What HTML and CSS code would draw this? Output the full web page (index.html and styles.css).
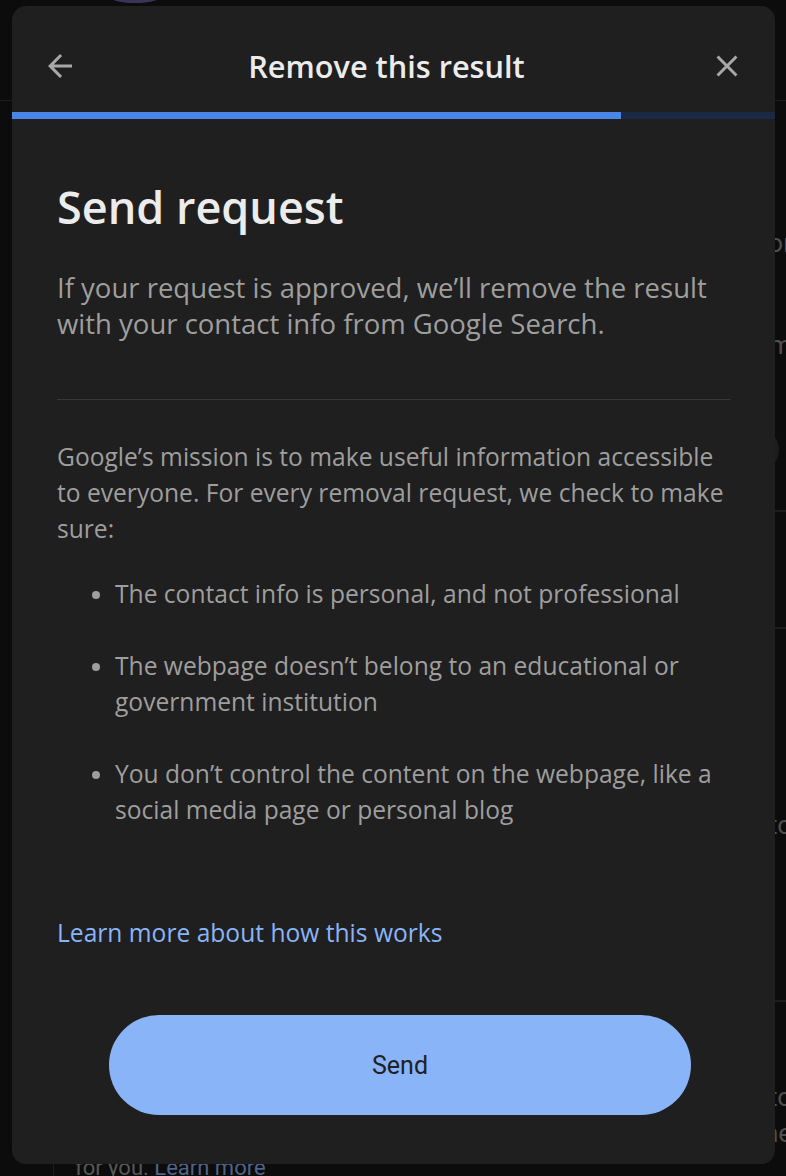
FILE: index.html
```html
<!DOCTYPE html>
<html lang="en">
<head>
<meta charset="utf-8">
<title>Remove this result</title>
<link rel="stylesheet" href="styles.css">
</head>
<body>
<div class="page">
  <div class="page-top"><span class="avatar"></span></div>
  <div class="page-rule"></div>
  <div class="page-side">
    <p class="side-word w1">For</p>
    <p class="side-word w2">Form</p>
    <span class="side-chip"></span>
    <div class="side-rule r1"></div>
    <div class="side-rule r2"></div>
    <p class="side-word w3">to</p>
    <div class="side-rule r3"></div>
    <p class="side-word w4">to</p>
    <p class="side-word w5">the</p>
  </div>
  <div class="page-foot"><span class="foot-text">for you. <span class="foot-link">Learn more</span></span></div>
</div>

<div class="modal" role="dialog" aria-label="Remove this result">
  <header class="modal-header">
    <button class="icon-btn" aria-label="Back">
      <svg viewBox="0 0 24 24" width="36" height="36"><path d="M20 11H7.83l5.59-5.59L12 4l-8 8 8 8 1.41-1.41L7.83 13H20v-2z"/></svg>
    </button>
    <h1 class="modal-title">Remove this result</h1>
    <button class="icon-btn" aria-label="Close">
      <svg viewBox="0 0 24 24" width="36" height="36"><path d="M19 6.41L17.59 5 12 10.59 6.41 5 5 6.41 10.59 12 5 17.59 6.41 19 12 13.41 17.59 19 19 17.59 13.41 12z"/></svg>
    </button>
  </header>
  <div class="progress"><div class="progress-fill"></div></div>
  <div class="modal-body">
    <h2 class="heading">Send request</h2>
    <p class="lead">If your request is approved, we’ll remove the result with your contact info from Google Search.</p>
    <hr class="divider">
    <p class="text">Google’s mission is to make useful information accessible to everyone. For every removal request, we check to make sure:</p>
    <ul class="checks">
      <li>The contact info is personal, and not professional</li>
      <li>The webpage doesn’t belong to an educational or government institution</li>
      <li>You don’t control the content on the webpage, like a social media page or personal blog</li>
    </ul>
    <a class="learn" href="#">Learn more about how this works</a>
  </div>
  <div class="modal-actions">
    <button class="send">Send</button>
  </div>
</div>
</body>
</html>
```

FILE: styles.css
```css
* { box-sizing: border-box; }
html, body { margin: 0; padding: 0; }
body {
  width: 786px;
  height: 1176px;
  overflow: hidden;
  background: #0c0c0c;
  font-family: "Open Sans", "Noto Sans", Arial, sans-serif;
}

/* ---- dimmed page behind the dialog ---- */
.page {
  position: relative;
  display: flow-root;
  width: 786px;
  height: 1176px;
  overflow: hidden;
}
.page-top {
  display: flow-root;
  height: 3px;
  overflow: hidden;
  padding-left: 103px;
}
.avatar {
  display: block;
  width: 64px;
  height: 22px;
  margin-top: -19px;
  border-radius: 50%;
  background: #3a3556;
}
.page-rule {
  margin-top: 97px;
  height: 1px;
  background: #1d1d1d;
}
.page-side {
  margin-left: 700px;
  width: 92px;
  padding-top: 127px;
  color: #4f4f4f;
  font-family: "Roboto", Arial, sans-serif;
  font-size: 26px;
  text-align: right;
}
.side-word { margin: 0; line-height: 30px; }
.w2 { margin-top: 72px; }
.side-chip {
  display: block;
  width: 44px; height: 44px;
  margin: 68px 0 0 35px;
  border-radius: 50%;
  background: #1c1c1c;
}
.side-rule { height: 2px; background: #1c1c1c; }
.r1 { margin-top: 38px; }
.r2 { margin-top: 115px; }
.w3 { margin-top: 181px; }
.r3 { margin-top: 160px; }
.w4 { margin-top: 80px; }
.w5 { margin-top: 6px; }
.page-foot {
  position: absolute;
  left: 53px; bottom: 0;
  width: 400px;
  height: 14px;
  border-left: 1px solid #1d1d1d;
  overflow: hidden;
}
.foot-text {
  display: block;
  margin-top: -9px;
  padding-left: 21px;
  font-family: "Roboto", Arial, sans-serif;
  font-size: 22px;
  line-height: 30px;
  color: #585858;
}
.foot-link { color: #4e6488; }

/* ---- dialog ---- */
.modal {
  position: absolute;
  left: 12px;
  top: 6px;
  width: 763px;
  height: 1158px;
  background: #1f1f1f;
  border-radius: 14px;
  overflow: hidden;
  display: flex;
  flex-direction: column;
}
.modal-header {
  height: 106px;
  padding: 14px 30px 0 30px;
  display: flex;
  align-items: center;
  justify-content: space-between;
}
.icon-btn {
  width: 36px; height: 36px;
  padding: 0;
  border: 0;
  background: none;
  fill: #a8a8a8;
  display: flex;
}
.modal-title {
  margin: 0 14px 0 0;
  font-weight: 600;
  font-size: 30.7px;
  color: #ececec;
}
.progress {
  height: 7px;
  background: #1a2a45;
}
.progress-fill {
  width: 609px;
  height: 100%;
  background: #4a86e8;
}
.modal-body {
  padding: 60px 45px 0 45px;
  flex: 1;
}
.heading {
  margin: 0;
  font-weight: 600;
  font-size: 45px;
  line-height: 56px;
  color: #ececec;
}
.lead {
  margin: 35px 0 0;
  font-size: 27.5px;
  line-height: 36px;
  color: #9e9e9e;
}
.text, .checks, .learn {
  font-size: 24.6px;
  line-height: 36px;
  color: #9e9e9e;
}
.divider {
  margin: 57px 0 0;
  border: 0;
  height: 1px;
  background: #383838;
}
.text { margin: 39px 0 0; }
.checks {
  margin: 29px 0 0;
  padding-left: 58px;
}
.checks li + li { margin-top: 36px; }
.checks li::marker { font-size: 22px; }
.learn {
  display: block;
  margin-top: 87px;
  color: #8ab4f8;
  text-decoration: none;
}
.modal-actions {
  padding: 0 0 49px 97px;
}
.send {
  width: 582px;
  height: 100px;
  border: 0;
  border-radius: 50px;
  background: #8ab4f8;
  color: #202124;
  font-family: "Roboto", Arial, sans-serif;
  font-size: 25px;
}
```
